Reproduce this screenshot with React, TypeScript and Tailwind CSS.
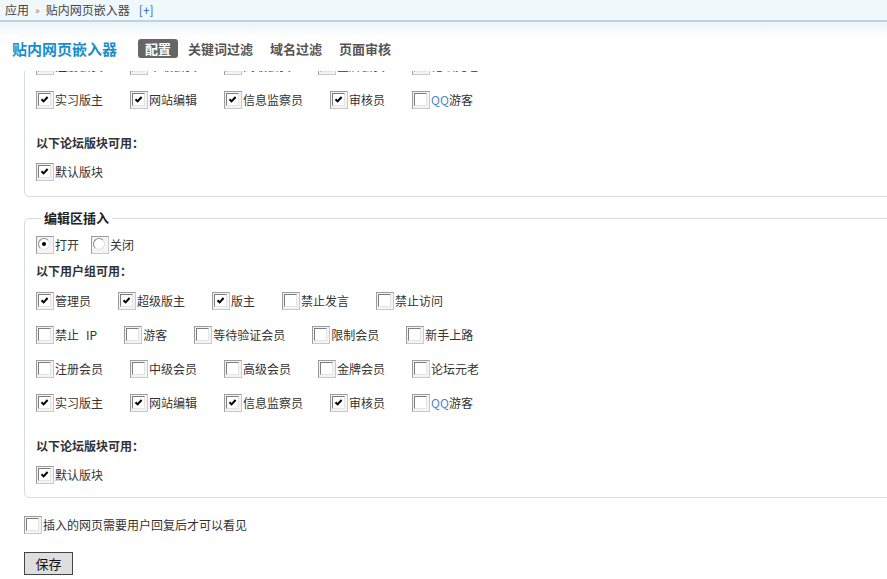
import React from 'react';

type Item = { label: string; on?: boolean };

const groupRows: Item[][] = [
    [{ label: '管理员', on: true }, { label: '超级版主', on: true }, { label: '版主', on: true }, { label: '禁止发言' }, { label: '禁止访问' }],
    [{ label: '禁止 IP' }, { label: '游客' }, { label: '等待验证会员' }, { label: '限制会员' }, { label: '新手上路' }],
    [{ label: '注册会员' }, { label: '中级会员' }, { label: '高级会员' }, { label: '金牌会员' }, { label: '论坛元老' }],
    [{ label: '实习版主', on: true }, { label: '网站编辑', on: true }, { label: '信息监察员', on: true }, { label: '审核员', on: true }, { label: 'QQ游客' }],
];

const font = { fontFamily: '"Noto Sans CJK SC", "Noto Sans", sans-serif' };

// old-style framed checkbox
const Box: React.FC<{ on?: boolean; round?: boolean }> = ({ on, round }) => (
    <span className="inline-flex w-[18px] h-[18px] shrink-0 border border-t-[#9c9c9c] border-l-[#9c9c9c] border-r-[#c9c9c9] border-b-[#c9c9c9] bg-[#f4f4f4] p-[1px]">
        {round ? (
            <span className="w-[12px] h-[12px] rounded-full border border-t-[#8a8a8a] border-l-[#8a8a8a] border-r-[#e2e2e2] border-b-[#e2e2e2] bg-white flex items-center justify-center">
                {on && <span className="w-[4px] h-[4px] rounded-full bg-black" />}
            </span>
        ) : (
            <span className="w-[13px] h-[13px] border border-t-[#7d7d7d] border-l-[#7d7d7d] border-r-[#e4e4e4] border-b-[#e4e4e4] bg-white flex items-center justify-center">
                {on && (
                    <svg width="9" height="9" viewBox="0 0 9 9">
                        <path d="M1.5 4.2 L3.6 6.4 L7.6 2" fill="none" stroke="#000" strokeWidth="2" />
                    </svg>
                )}
            </span>
        )}
    </span>
);

const Check: React.FC<{ item: Item }> = ({ item }) => {
    const [a, b] = item.label.split(' ');
    const qq = item.label.startsWith('QQ');
    return (
        <label className="inline-flex items-center mr-[27px]">
            <Box on={item.on} />
            <span className="ml-[1px]">
                {qq ? (
                    <>
                        <span className="text-[#4a86c8]">QQ</span>游客
                    </>
                ) : b ? (
                    <>
                        {a}
                        <span className="ml-[7px]">{b}</span>
                    </>
                ) : (
                    item.label
                )}
            </span>
        </label>
    );
};

const InsertFieldset: React.FC<{ legend: string; extraBottom?: boolean; className?: string }> = ({ legend, extraBottom, className }) => (
    <fieldset
        className={`w-[880px] border border-[#d3dde6] rounded-[5px] px-[11px] ${extraBottom ? 'pb-[7px]' : 'pb-[5px]'} ${className ?? ''}`}
    >
        <legend className="ml-[5px] px-[3px] leading-[16px] text-[13px] font-bold text-[#222]">{legend}</legend>
        <div className="pt-[4px] h-[34px] flex items-center">
            <label className="inline-flex items-center mr-[12px]">
                <Box round on />
                <span className="ml-[1px]">打开</span>
            </label>
            <label className="inline-flex items-center">
                <Box round />
                <span className="ml-[1px]">关闭</span>
            </label>
        </div>
        <div className="h-[22px] flex items-center font-bold">以下用户组可用：</div>
        <div className="mt-[2px]">
            {groupRows.map((row, i) => (
                <div key={i} className="h-[34px] flex items-center">
                    {row.map((it) => (
                        <Check key={it.label} item={it} />
                    ))}
                </div>
            ))}
        </div>
        <div className="mt-[15px] h-[22px] flex items-center font-bold">以下论坛版块可用：</div>
        <div className="mt-[1px] h-[34px] flex items-center">
            <Check item={{ label: '默认版块', on: true }} />
        </div>
    </fieldset>
);

export default function App() {
    return (
        <div className="h-[579px] w-[887px] overflow-hidden flex flex-col bg-white text-[12px] text-[#333]" style={font}>
            {/* header */}
            <div className="h-[71px] min-h-[71px] shrink-0 flex flex-col relative z-10 bg-white">
                <div className="h-[22px] bg-[#f1f8fc] border-b-2 border-[#bdd5e1] flex items-center px-[5px] text-[#444] leading-none">
                    <span>应用</span>
                    <span className="mx-[6px] text-[10px] text-[#c07a3a]">»</span>
                    <span>贴内网页嵌入器</span>
                    <span className="ml-[9px] text-[#2366b0]">[+]</span>
                </div>
                <div className="flex-1 bg-gradient-to-b from-[#eaf4f9] to-white to-[30%] flex items-center pl-[12px] pt-[4px]">
                    <h1 className="text-[15px] font-bold text-[#1b8fcb] leading-none">贴内网页嵌入器</h1>
                    <nav className="ml-[21px] flex gap-[3px] text-[13px] font-bold text-[#555]">
                        <span className="px-[7px] h-[19px] leading-[19px] rounded-[3px] bg-[#666] text-white">配置</span>
                        <span className="px-[7px] h-[19px] leading-[19px]">关键词过滤</span>
                        <span className="px-[7px] h-[19px] leading-[19px]">域名过滤</span>
                        <span className="px-[7px] h-[19px] leading-[19px]">页面审核</span>
                    </nav>
                </div>
            </div>

            {/* scrolled body */}
            <div className="flex-1 min-h-0 overflow-hidden">
                <div className="mt-[-164px] pl-[24px]">
                    <InsertFieldset legend="帖子区插入" extraBottom />
                    <InsertFieldset legend="编辑区插入" className="mt-[13px]" />
                    <div className="mt-[10px] h-[34px] flex items-center">
                        <label className="inline-flex items-center">
                            <Box />
                            <span className="ml-[1px]">插入的网页需要用户回复后才可以看见</span>
                        </label>
                    </div>
                    <button className="mt-[10px] w-[49px] h-[23px] border border-[#444] bg-[#dedede] text-[13px] text-[#111] leading-none">
                        保存
                    </button>
                </div>
            </div>
        </div>
    );
}
